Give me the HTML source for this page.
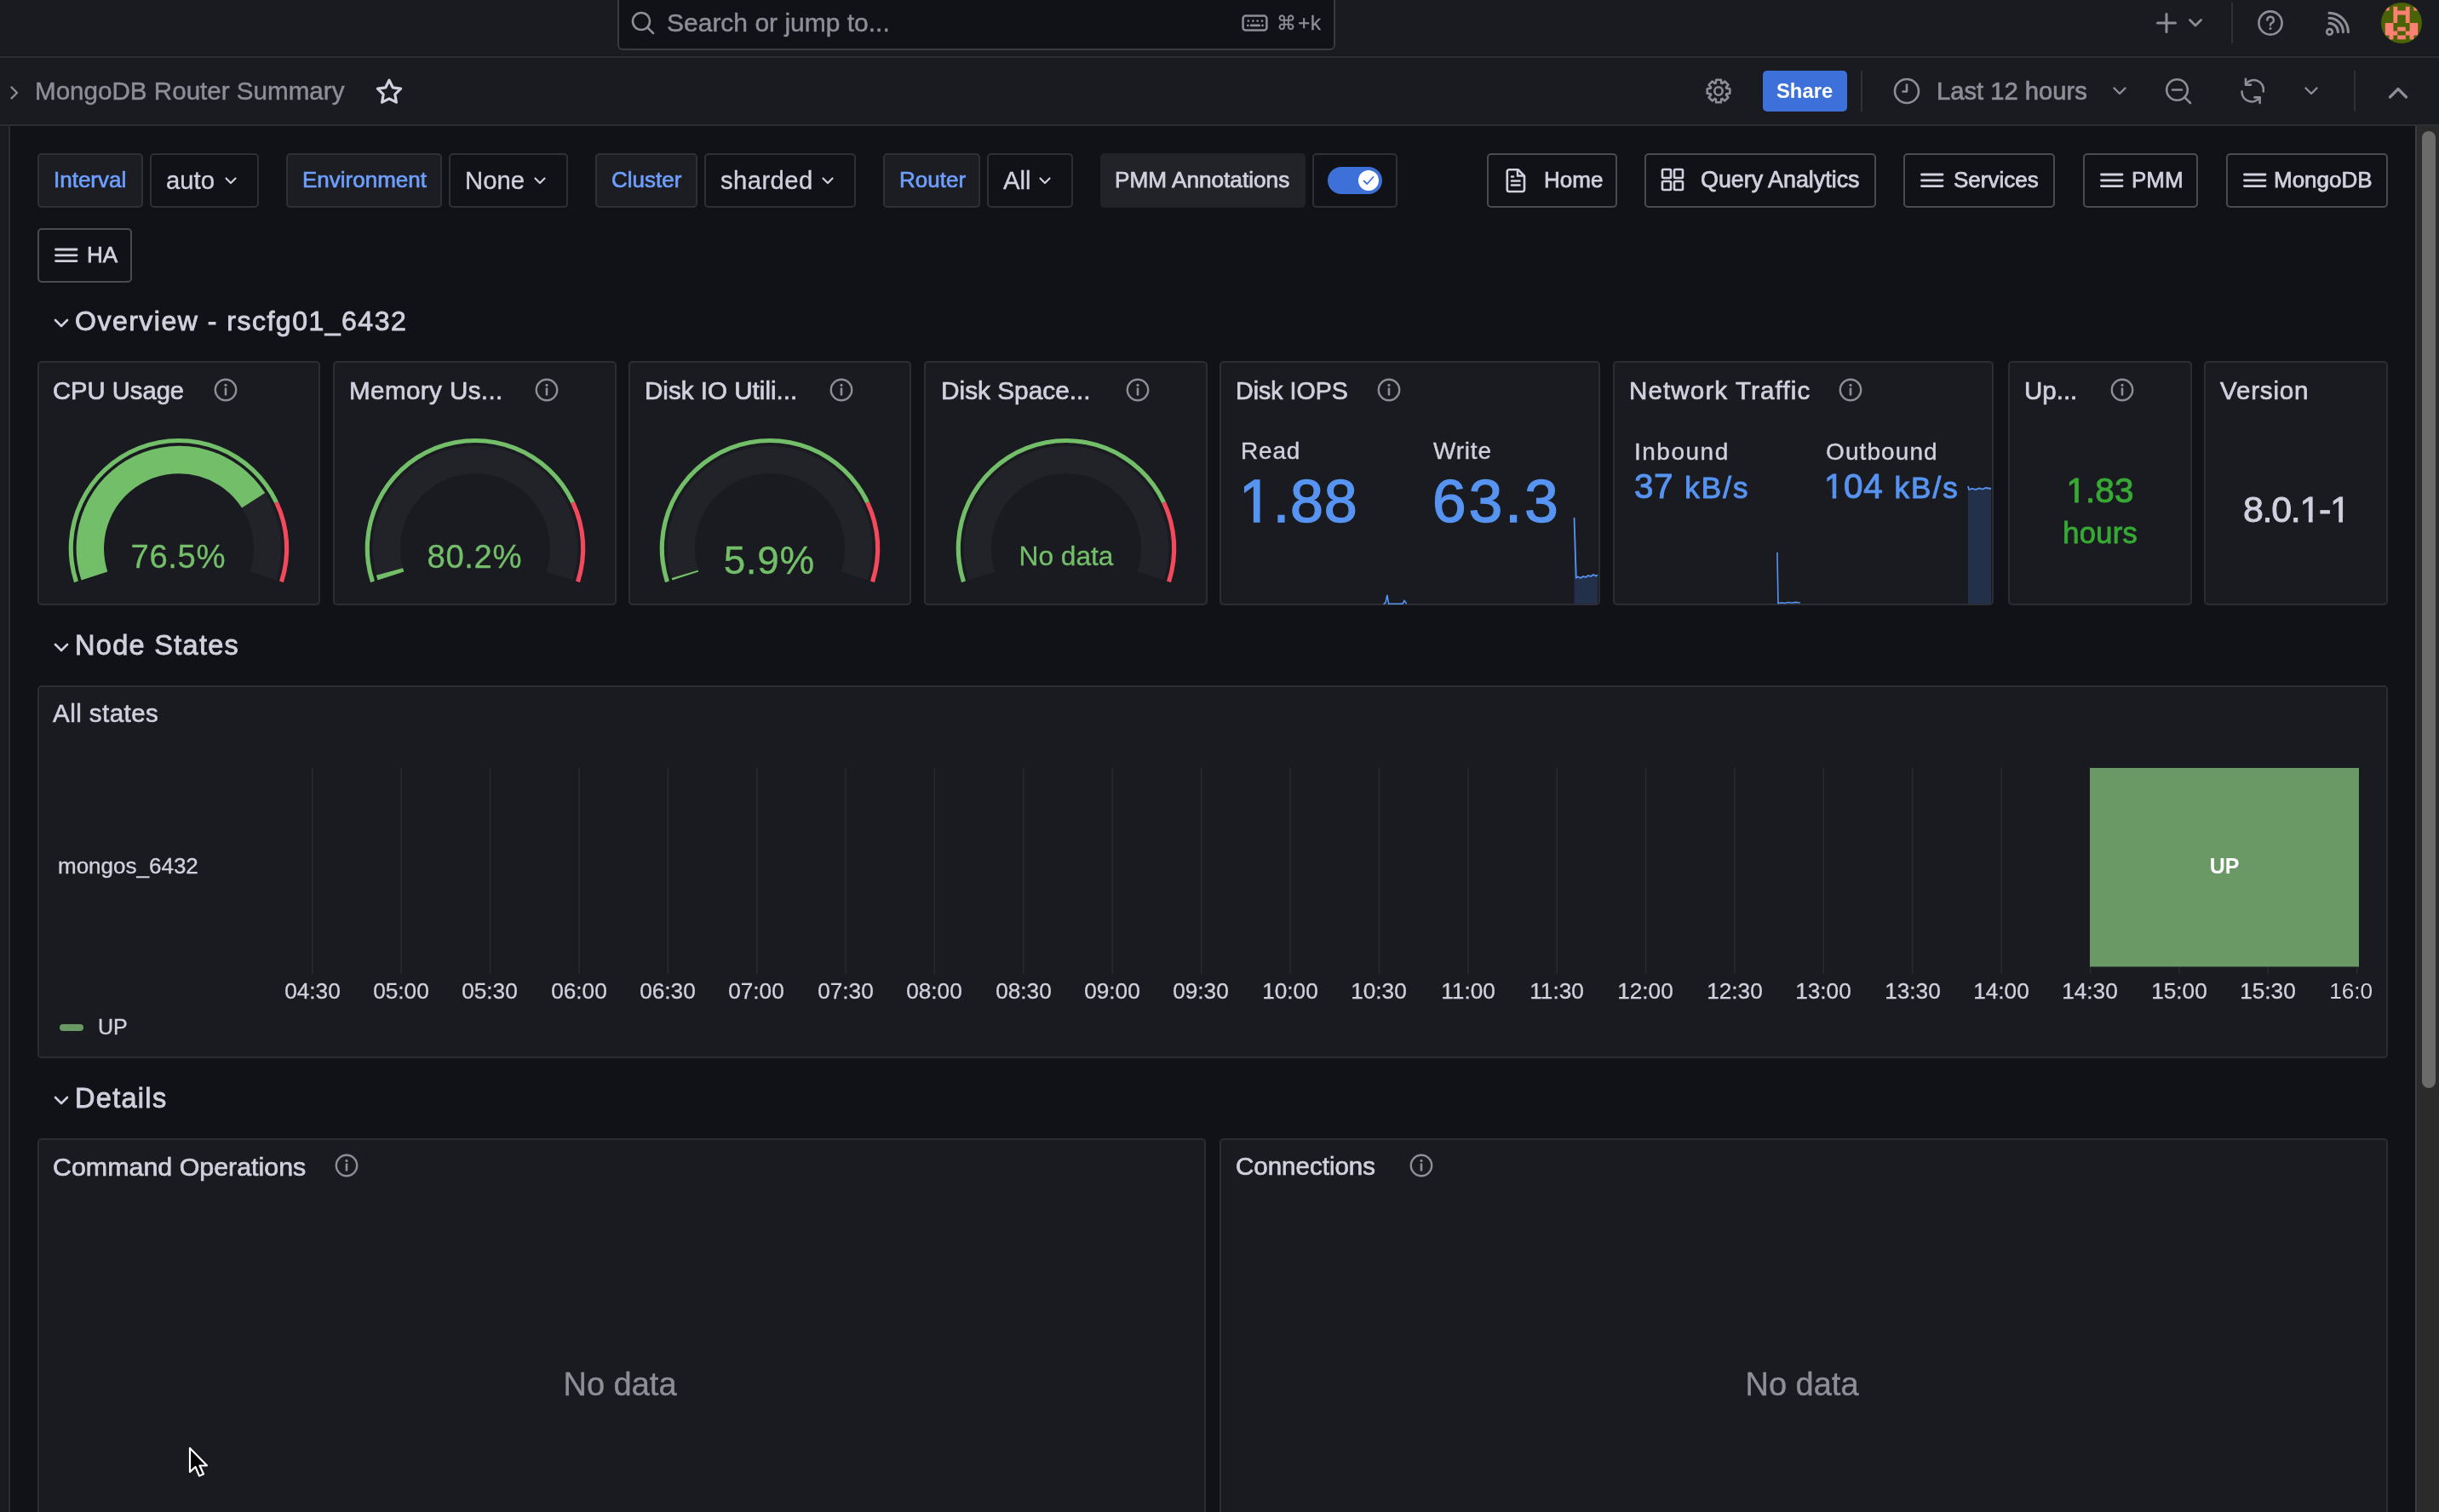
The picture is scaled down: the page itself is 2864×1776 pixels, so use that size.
<!DOCTYPE html><html><head><meta charset="utf-8"><style>
html,body{margin:0;padding:0;}
body{width:2864px;height:1776px;overflow:hidden;position:relative;background:#111217;font-family:"Liberation Sans", sans-serif;}
.t{position:absolute;white-space:nowrap;line-height:0;will-change:transform;}
.t span{display:inline-block;line-height:0;}
.b{position:absolute;box-sizing:border-box;}
.s{position:absolute;overflow:visible;}
</style></head><body>
<div class="b" style="left:0px;top:0px;width:2864px;height:146px;background:#1a1b20;border-radius:0px;"></div>
<div class="b" style="left:0px;top:66px;width:2864px;height:2px;background:#2c2d33;border-radius:0px;"></div>
<div class="b" style="left:0px;top:146px;width:2864px;height:2px;background:#2c2d33;border-radius:0px;"></div>
<div class="b" style="left:0px;top:148px;width:10px;height:1628px;background:#1a1b20;border-radius:0px;"></div>
<div class="b" style="left:10px;top:148px;width:2px;height:1628px;background:#2c2d33;border-radius:0px;"></div>
<div class="b" style="left:725px;top:-8px;width:843px;height:67px;background:#111217;border-radius:6px;box-shadow: inset 0 0 0 2px #383a41;"></div>
<svg class="s" style="left:740px;top:12px;" width="30" height="30" viewBox="0 0 30 30"><circle cx="13" cy="13" r="10" fill="none" stroke="#8e8e99" stroke-width="2.6"/><line x1="20.5" y1="20.5" x2="27" y2="27" stroke="#8e8e99" stroke-width="2.6" stroke-linecap="round"/></svg>
<div class="t" style="left:783px;top:26.61px;font-size:30px;color:#8e8e99;font-weight:400;-webkit-text-stroke:0.45px #8e8e99;"><span>Search or jump to...</span></div>
<svg class="s" style="left:1458px;top:17px;" width="32" height="20" viewBox="0 0 32 20"><rect x="1.6" y="1.6" width="27.8" height="17" rx="3.2" fill="none" stroke="#8e8e99" stroke-width="2.5"/><circle cx="7.9" cy="7.6" r="1.35" fill="#8e8e99"/><circle cx="13.4" cy="7.6" r="1.35" fill="#8e8e99"/><circle cx="18.7" cy="7.6" r="1.35" fill="#8e8e99"/><circle cx="24" cy="7.6" r="1.35" fill="#8e8e99"/><circle cx="7.3" cy="12.9" r="1.35" fill="#8e8e99"/><circle cx="24.6" cy="12.9" r="1.35" fill="#8e8e99"/><line x1="11" y1="12.9" x2="20.8" y2="12.9" stroke="#8e8e99" stroke-width="2.6" stroke-linecap="round"/></svg>
<div class="t" style="left:1498.5px;top:27.01px;font-size:24.5px;color:#8e8e99;font-weight:400;-webkit-text-stroke:0.3px #8e8e99;"><span><span style="font-size:23px">&#8984;</span><span style="margin-left:2px">+</span><span style="margin-left:0.5px">k</span></span></div>
<svg class="s" style="left:2530px;top:13px;" width="28" height="28" viewBox="0 0 28 28"><path d="M14 3.5V24.5M3.5 14H24.5" stroke="#8e8e99" stroke-width="3" stroke-linecap="round"/></svg>
<svg class="s" style="left:2569px;top:21px;" width="18" height="12" viewBox="0 0 18 12"><path d="M2.5 2.5L9 9L15.5 2.5" fill="none" stroke="#8e8e99" stroke-width="2.8" stroke-linecap="round" stroke-linejoin="round"/></svg>
<div class="b" style="left:2620px;top:3px;width:2px;height:48px;background:#303137;border-radius:0px;"></div>
<svg class="s" style="left:2650px;top:11px;" width="32" height="32" viewBox="0 0 32 32"><circle cx="16" cy="16" r="13.6" fill="none" stroke="#8e8e99" stroke-width="2.6"/><path d="M12.3 12.6a3.8 3.8 0 1 1 5.2 3.5c-1 .4-1.5 1.1-1.5 2.1v.6" fill="none" stroke="#8e8e99" stroke-width="2.4" stroke-linecap="round"/><circle cx="16" cy="22.6" r="1.5" fill="#8e8e99"/></svg>
<svg class="s" style="left:2720px;top:5px;" width="50" height="45" viewBox="0 0 50 45"><circle cx="15.5" cy="32.4" r="3.3" fill="none" stroke="#8e8e99" stroke-width="2.7"/><path d="M15 22.2a10.4 10.4 0 0 1 10.4 10.4M15 16.2a16.4 16.4 0 0 1 16.4 16.4M15 10.2a22.4 22.4 0 0 1 22.4 22.4" fill="none" stroke="#8e8e99" stroke-width="3.1" stroke-linecap="round"/></svg>
<svg class="s" style="left:2796px;top:3px;" width="48" height="48" viewBox="0 0 48 48"><defs><clipPath id="av"><circle cx="24" cy="24" r="24"/></clipPath></defs><g clip-path="url(#av)"><rect width="48" height="48" fill="#4a6306"/><path fill="#ff7f73" d="M4.8 4.8h4.8v4.8h-4.8zM14.4 4.8h4.8v4.8h-4.8zM28.8 4.8h4.8v4.8h-4.8zM38.4 4.8h4.8v4.8h-4.8zM14.4 9.6h4.8v4.8h-4.8zM19.2 9.6h4.8v4.8h-4.8zM24.0 9.6h4.8v4.8h-4.8zM28.8 9.6h4.8v4.8h-4.8zM14.4 14.4h4.8v4.8h-4.8zM28.8 14.4h4.8v4.8h-4.8zM14.4 19.2h4.8v4.8h-4.8zM28.8 19.2h4.8v4.8h-4.8zM4.8 24.0h4.8v4.8h-4.8zM9.6 24.0h4.8v4.8h-4.8zM33.6 24.0h4.8v4.8h-4.8zM38.4 24.0h4.8v4.8h-4.8zM4.8 28.8h4.8v4.8h-4.8zM9.6 28.8h4.8v4.8h-4.8zM19.2 28.8h4.8v4.8h-4.8zM24.0 28.8h4.8v4.8h-4.8zM33.6 28.8h4.8v4.8h-4.8zM38.4 28.8h4.8v4.8h-4.8zM4.8 33.6h4.8v4.8h-4.8zM9.6 33.6h4.8v4.8h-4.8zM14.4 33.6h4.8v4.8h-4.8zM28.8 33.6h4.8v4.8h-4.8zM33.6 33.6h4.8v4.8h-4.8zM38.4 33.6h4.8v4.8h-4.8zM9.6 38.4h4.8v4.8h-4.8zM19.2 38.4h4.8v4.8h-4.8zM24.0 38.4h4.8v4.8h-4.8zM33.6 38.4h4.8v4.8h-4.8z"/></g></svg>
<svg class="s" style="left:10px;top:100px;" width="14" height="18" viewBox="0 0 14 18"><path d="M3.5 2.5L10 9L3.5 15.5" fill="none" stroke="#8e8e99" stroke-width="2.4" stroke-linecap="round" stroke-linejoin="round"/></svg>
<div class="t" style="left:40.5px;top:106.74px;font-size:29.6px;color:#8e8e99;font-weight:400;-webkit-text-stroke:0.45px #8e8e99;"><span>MongoDB Router Summary</span></div>
<svg class="s" style="left:440px;top:91px;" width="34" height="32" viewBox="0 0 34 32"><path d="M17 3.2l4.2 8.6 9.4 1.4-6.8 6.6 1.6 9.4L17 24.8l-8.4 4.4 1.6-9.4-6.8-6.6 9.4-1.4z" fill="none" stroke="#d0d0de" stroke-width="3.2" stroke-linejoin="round"/></svg>
<svg class="s" style="left:2002px;top:91px;" width="32" height="32" viewBox="0 0 32 32"><path d="M12.78 6.64L13.17 2.70L18.83 2.70L19.22 6.64L20.34 7.10L23.41 4.59L27.41 8.59L24.90 11.66L25.36 12.78L29.30 13.17L29.30 18.83L25.36 19.22L24.90 20.34L27.41 23.41L23.41 27.41L20.34 24.90L19.22 25.36L18.83 29.30L13.17 29.30L12.78 25.36L11.66 24.90L8.59 27.41L4.59 23.41L7.10 20.34L6.64 19.22L2.70 18.83L2.70 13.17L6.64 12.78L7.10 11.66L4.59 8.59L8.59 4.59L11.66 7.10Z" fill="none" stroke="#8e8e99" stroke-width="2.6" stroke-linejoin="round"/><circle cx="16" cy="16" r="4.7" fill="none" stroke="#8e8e99" stroke-width="2.6"/></svg>
<div class="b" style="left:2070px;top:83px;width:99px;height:48px;background:#3d71d9;border-radius:5px;"></div>
<div class="t" style="left:2086px;top:106.75px;font-size:23.8px;color:#ffffff;font-weight:700;"><span>Share</span></div>
<div class="b" style="left:2185px;top:83px;width:2px;height:48px;background:#303137;border-radius:0px;"></div>
<svg class="s" style="left:2222px;top:90px;" width="34" height="34" viewBox="0 0 34 34"><circle cx="17" cy="17" r="14" fill="none" stroke="#8e8e99" stroke-width="2.6"/><path d="M17 9.5V17.5H12.5" fill="none" stroke="#8e8e99" stroke-width="2.6" stroke-linecap="round" stroke-linejoin="round"/></svg>
<div class="t" style="left:2274px;top:106.88px;font-size:29.2px;color:#8e8e99;font-weight:400;-webkit-text-stroke:0.7px #8e8e99;"><span>Last 12 hours</span></div>
<svg class="s" style="left:2480px;top:101px;" width="18" height="12" viewBox="0 0 18 12"><path d="M2.5 2.5L9 9L15.5 2.5" fill="none" stroke="#8e8e99" stroke-width="2.4" stroke-linecap="round" stroke-linejoin="round"/></svg>
<svg class="s" style="left:2541px;top:90px;" width="34" height="34" viewBox="0 0 34 34"><circle cx="15.5" cy="15.5" r="12.3" fill="none" stroke="#8e8e99" stroke-width="2.6"/><path d="M10 15.5H21M24.3 24.3L31 31" fill="none" stroke="#8e8e99" stroke-width="2.6" stroke-linecap="round"/></svg>
<svg class="s" style="left:2629px;top:90px;" width="34" height="34" viewBox="0 0 34 34"><path d="M3.6 17.5A11.5 11.5 0 0 0 24.5 24.5M28.8 17.5A11.5 11.5 0 0 0 8 9" fill="none" stroke="#8e8e99" stroke-width="2.6" stroke-linecap="round"/><path d="M8 2.8V9.6H14" fill="none" stroke="#8e8e99" stroke-width="2.6" stroke-linecap="round" stroke-linejoin="round"/><path d="M24.6 31V24.4H18.4" fill="none" stroke="#8e8e99" stroke-width="2.6" stroke-linecap="round" stroke-linejoin="round"/></svg>
<svg class="s" style="left:2705px;top:101px;" width="18" height="12" viewBox="0 0 18 12"><path d="M2.5 2.5L9 9L15.5 2.5" fill="none" stroke="#8e8e99" stroke-width="2.4" stroke-linecap="round" stroke-linejoin="round"/></svg>
<div class="b" style="left:2764px;top:83px;width:2px;height:48px;background:#303137;border-radius:0px;"></div>
<svg class="s" style="left:2804px;top:101px;" width="24" height="16" viewBox="0 0 24 16"><path d="M2.5 13L12 3.5L21.5 13" fill="none" stroke="#8e8e99" stroke-width="3.2" stroke-linecap="round" stroke-linejoin="round"/></svg>
<div class="b" style="left:44px;top:180px;width:124px;height:64px;background:#1c1d22;border-radius:5px;box-shadow: inset 0 0 0 2px #2f3036;"></div>
<div class="t" style="left:63px;top:210.99px;font-size:26px;color:#6e9fff;font-weight:400;-webkit-text-stroke:0.65px #6e9fff;"><span>Interval</span></div>
<div class="b" style="left:176px;top:180px;width:128px;height:64px;background:#111217;border-radius:5px;box-shadow: inset 0 0 0 2px #2f3036;"></div>
<div class="t" style="left:195px;top:211.85px;font-size:29.3px;color:#d0d0de;font-weight:400;letter-spacing:0px;-webkit-text-stroke:0.35px #d0d0de;"><span>auto</span></div>
<svg class="s" style="left:264px;top:208px;" width="14" height="9" viewBox="0 0 14 9"><path d="M1.5 1.5L7 7L12.5 1.5" fill="none" stroke="#d0d0de" stroke-width="2.2" stroke-linecap="round" stroke-linejoin="round"/></svg>
<div class="b" style="left:336px;top:180px;width:183px;height:64px;background:#1c1d22;border-radius:5px;box-shadow: inset 0 0 0 2px #2f3036;"></div>
<div class="t" style="left:355px;top:210.99px;font-size:26px;color:#6e9fff;font-weight:400;-webkit-text-stroke:0.65px #6e9fff;"><span>Environment</span></div>
<div class="b" style="left:527px;top:180px;width:140px;height:64px;background:#111217;border-radius:5px;box-shadow: inset 0 0 0 2px #2f3036;"></div>
<div class="t" style="left:546px;top:211.85px;font-size:29.3px;color:#d0d0de;font-weight:400;letter-spacing:0px;-webkit-text-stroke:0.35px #d0d0de;"><span>None</span></div>
<svg class="s" style="left:627px;top:208px;" width="14" height="9" viewBox="0 0 14 9"><path d="M1.5 1.5L7 7L12.5 1.5" fill="none" stroke="#d0d0de" stroke-width="2.2" stroke-linecap="round" stroke-linejoin="round"/></svg>
<div class="b" style="left:699px;top:180px;width:120px;height:64px;background:#1c1d22;border-radius:5px;box-shadow: inset 0 0 0 2px #2f3036;"></div>
<div class="t" style="left:718px;top:210.99px;font-size:26px;color:#6e9fff;font-weight:400;-webkit-text-stroke:0.65px #6e9fff;"><span>Cluster</span></div>
<div class="b" style="left:827px;top:180px;width:178px;height:64px;background:#111217;border-radius:5px;box-shadow: inset 0 0 0 2px #2f3036;"></div>
<div class="t" style="left:846px;top:211.85px;font-size:29.3px;color:#d0d0de;font-weight:400;letter-spacing:0.4px;-webkit-text-stroke:0.35px #d0d0de;"><span>sharded</span></div>
<svg class="s" style="left:965px;top:208px;" width="14" height="9" viewBox="0 0 14 9"><path d="M1.5 1.5L7 7L12.5 1.5" fill="none" stroke="#d0d0de" stroke-width="2.2" stroke-linecap="round" stroke-linejoin="round"/></svg>
<div class="b" style="left:1037px;top:180px;width:114px;height:64px;background:#1c1d22;border-radius:5px;box-shadow: inset 0 0 0 2px #2f3036;"></div>
<div class="t" style="left:1056px;top:210.99px;font-size:26px;color:#6e9fff;font-weight:400;-webkit-text-stroke:0.65px #6e9fff;"><span>Router</span></div>
<div class="b" style="left:1159px;top:180px;width:101px;height:64px;background:#111217;border-radius:5px;box-shadow: inset 0 0 0 2px #2f3036;"></div>
<div class="t" style="left:1178px;top:211.85px;font-size:29.3px;color:#d0d0de;font-weight:400;letter-spacing:0px;-webkit-text-stroke:0.35px #d0d0de;"><span>All</span></div>
<svg class="s" style="left:1220px;top:208px;" width="14" height="9" viewBox="0 0 14 9"><path d="M1.5 1.5L7 7L12.5 1.5" fill="none" stroke="#d0d0de" stroke-width="2.2" stroke-linecap="round" stroke-linejoin="round"/></svg>
<div class="b" style="left:1292px;top:180px;width:241px;height:64px;background:#222329;border-radius:5px;"></div>
<div class="t" style="left:1309px;top:210.92px;font-size:26.2px;color:#d0d0de;font-weight:400;-webkit-text-stroke:0.75px #d0d0de;"><span>PMM Annotations</span></div>
<div class="b" style="left:1541px;top:180px;width:100px;height:64px;background:#111217;border-radius:5px;box-shadow: inset 0 0 0 2px #2f3036;"></div>
<div class="b" style="left:1559px;top:196px;width:64px;height:32px;background:#3d71d9;border-radius:16px;"></div>
<svg class="s" style="left:1593px;top:198px;" width="28" height="28" viewBox="0 0 28 28"><circle cx="14" cy="14" r="12" fill="#fff"/><path d="M8.5 14.5L12.3 18L19.5 10" fill="none" stroke="#3d71d9" stroke-width="1.8" stroke-linecap="round" stroke-linejoin="round"/></svg>
<div class="b" style="left:1746px;top:180px;width:153px;height:64px;background:#111217;border-radius:5px;box-shadow: inset 0 0 0 2px #4a4b51;"></div>
<div class="t" style="left:1813px;top:210.99px;font-size:26px;color:#d0d0de;font-weight:400;-webkit-text-stroke:0.75px #d0d0de;"><span>Home</span></div>
<svg class="s" style="left:1768px;top:197px;" width="26" height="30" viewBox="0 0 26 30"><path d="M4 2.2h10.5l7.5 7.5v16.1a2.2 2.2 0 0 1-2.2 2.2H4a2.2 2.2 0 0 1-2.2-2.2V4.4A2.2 2.2 0 0 1 4 2.2z" fill="none" stroke="#d0d0de" stroke-width="2.6" stroke-linejoin="round"/><path d="M14 2.5V9.5H21.5" fill="none" stroke="#d0d0de" stroke-width="2.4"/><path d="M7 10.5H9M7 15.5H16.5M7 20.5H16.5" stroke="#d0d0de" stroke-width="2.6" stroke-linecap="round"/></svg>
<div class="b" style="left:1931px;top:180px;width:272px;height:64px;background:#111217;border-radius:5px;box-shadow: inset 0 0 0 2px #4a4b51;"></div>
<div class="t" style="left:1997px;top:210.70px;font-size:26.85px;color:#d0d0de;font-weight:400;-webkit-text-stroke:0.75px #d0d0de;"><span>Query Analytics</span></div>
<svg class="s" style="left:1950px;top:197px;" width="30" height="30" viewBox="0 0 30 30"><rect x="2" y="2" width="10" height="10" rx="1.2" fill="none" stroke="#d0d0de" stroke-width="2.6"/><rect x="2" y="16" width="10" height="10" rx="1.2" fill="none" stroke="#d0d0de" stroke-width="2.6"/><rect x="16" y="2" width="10" height="10" rx="1.2" fill="none" stroke="#d0d0de" stroke-width="2.6"/><rect x="16" y="16" width="10" height="10" rx="1.2" fill="none" stroke="#d0d0de" stroke-width="2.6"/></svg>
<div class="b" style="left:2235px;top:180px;width:178px;height:64px;background:#111217;border-radius:5px;box-shadow: inset 0 0 0 2px #4a4b51;"></div>
<div class="t" style="left:2294px;top:210.99px;font-size:26px;color:#d0d0de;font-weight:400;-webkit-text-stroke:0.75px #d0d0de;"><span>Services</span></div>
<svg class="s" style="left:2255px;top:203px;" width="28" height="18" viewBox="0 0 28 18"><line x1="1.5" y1="2.0" x2="26" y2="2.0" stroke="#d0d0de" stroke-width="2.8" stroke-linecap="round"/><line x1="1.5" y1="8.8" x2="26" y2="8.8" stroke="#d0d0de" stroke-width="2.8" stroke-linecap="round"/><line x1="1.5" y1="15.6" x2="26" y2="15.6" stroke="#d0d0de" stroke-width="2.8" stroke-linecap="round"/></svg>
<div class="b" style="left:2446px;top:180px;width:135px;height:64px;background:#111217;border-radius:5px;box-shadow: inset 0 0 0 2px #4a4b51;"></div>
<div class="t" style="left:2503px;top:210.99px;font-size:26px;color:#d0d0de;font-weight:400;-webkit-text-stroke:0.75px #d0d0de;"><span>PMM</span></div>
<svg class="s" style="left:2466px;top:203px;" width="28" height="18" viewBox="0 0 28 18"><line x1="1.5" y1="2.0" x2="26" y2="2.0" stroke="#d0d0de" stroke-width="2.8" stroke-linecap="round"/><line x1="1.5" y1="8.8" x2="26" y2="8.8" stroke="#d0d0de" stroke-width="2.8" stroke-linecap="round"/><line x1="1.5" y1="15.6" x2="26" y2="15.6" stroke="#d0d0de" stroke-width="2.8" stroke-linecap="round"/></svg>
<div class="b" style="left:2614px;top:180px;width:190px;height:64px;background:#111217;border-radius:5px;box-shadow: inset 0 0 0 2px #4a4b51;"></div>
<div class="t" style="left:2670px;top:210.99px;font-size:26px;color:#d0d0de;font-weight:400;-webkit-text-stroke:0.75px #d0d0de;"><span>MongoDB</span></div>
<svg class="s" style="left:2634px;top:203px;" width="28" height="18" viewBox="0 0 28 18"><line x1="1.5" y1="2.0" x2="26" y2="2.0" stroke="#d0d0de" stroke-width="2.8" stroke-linecap="round"/><line x1="1.5" y1="8.8" x2="26" y2="8.8" stroke="#d0d0de" stroke-width="2.8" stroke-linecap="round"/><line x1="1.5" y1="15.6" x2="26" y2="15.6" stroke="#d0d0de" stroke-width="2.8" stroke-linecap="round"/></svg>
<div class="b" style="left:44px;top:268px;width:111px;height:64px;background:#111217;border-radius:5px;box-shadow: inset 0 0 0 2px #4a4b51;"></div>
<svg class="s" style="left:64px;top:291px;" width="28" height="18" viewBox="0 0 28 18"><line x1="1.5" y1="2.0" x2="26" y2="2.0" stroke="#d0d0de" stroke-width="2.8" stroke-linecap="round"/><line x1="1.5" y1="8.8" x2="26" y2="8.8" stroke="#d0d0de" stroke-width="2.8" stroke-linecap="round"/><line x1="1.5" y1="15.6" x2="26" y2="15.6" stroke="#d0d0de" stroke-width="2.8" stroke-linecap="round"/></svg>
<div class="t" style="left:102px;top:298.99px;font-size:26px;color:#d0d0de;font-weight:400;-webkit-text-stroke:0.75px #d0d0de;"><span>HA</span></div>
<div class="b" style="left:2836px;top:148px;width:28px;height:1628px;background:#2b2b2b;border-radius:0px;"></div>
<div class="b" style="left:2836px;top:148px;width:2px;height:1628px;background:#3d3d3d;border-radius:0px;"></div>
<div class="b" style="left:2844px;top:154px;width:16px;height:1124px;background:#6b6b6b;border-radius:8px;"></div>
<svg class="s" style="left:62px;top:372.5px;" width="20" height="14" viewBox="0 0 20 14"><path d="M3 3L10 10L17 3" fill="none" stroke="#d0d0de" stroke-width="2.6" stroke-linecap="round" stroke-linejoin="round"/></svg>
<div class="t" style="left:88px;top:377.41px;font-size:32px;color:#d0d0de;font-weight:400;letter-spacing:1.5px;-webkit-text-stroke:0.9px #d0d0de;"><span>Overview - rscfg01_6432</span></div>
<svg class="s" style="left:62px;top:753.5px;" width="20" height="14" viewBox="0 0 20 14"><path d="M3 3L10 10L17 3" fill="none" stroke="#d0d0de" stroke-width="2.6" stroke-linecap="round" stroke-linejoin="round"/></svg>
<div class="t" style="left:87.5px;top:758.24px;font-size:32.5px;color:#d0d0de;font-weight:400;letter-spacing:1.3px;-webkit-text-stroke:0.9px #d0d0de;"><span>Node States</span></div>
<svg class="s" style="left:62px;top:1285.5px;" width="20" height="14" viewBox="0 0 20 14"><path d="M3 3L10 10L17 3" fill="none" stroke="#d0d0de" stroke-width="2.6" stroke-linecap="round" stroke-linejoin="round"/></svg>
<div class="t" style="left:87.5px;top:1290.24px;font-size:32.5px;color:#d0d0de;font-weight:400;letter-spacing:1.3px;-webkit-text-stroke:0.9px #d0d0de;"><span>Details</span></div>
<div class="b" style="left:44px;top:424px;width:332px;height:287px;background:#1a1b20;border-radius:5px;box-shadow: inset 0 0 0 2px #2c2d33;"></div>
<div class="b" style="left:391px;top:424px;width:333px;height:287px;background:#1a1b20;border-radius:5px;box-shadow: inset 0 0 0 2px #2c2d33;"></div>
<div class="b" style="left:738px;top:424px;width:332px;height:287px;background:#1a1b20;border-radius:5px;box-shadow: inset 0 0 0 2px #2c2d33;"></div>
<div class="b" style="left:1085px;top:424px;width:333px;height:287px;background:#1a1b20;border-radius:5px;box-shadow: inset 0 0 0 2px #2c2d33;"></div>
<div class="b" style="left:1432px;top:424px;width:447px;height:287px;background:#1a1b20;border-radius:5px;box-shadow: inset 0 0 0 2px #2c2d33;"></div>
<div class="b" style="left:1894px;top:424px;width:447px;height:287px;background:#1a1b20;border-radius:5px;box-shadow: inset 0 0 0 2px #2c2d33;"></div>
<div class="b" style="left:2358px;top:424px;width:216px;height:287px;background:#1a1b20;border-radius:5px;box-shadow: inset 0 0 0 2px #2c2d33;"></div>
<div class="b" style="left:2588px;top:424px;width:216px;height:287px;background:#1a1b20;border-radius:5px;box-shadow: inset 0 0 0 2px #2c2d33;"></div>
<div class="t" style="left:62px;top:458.88px;font-size:29.2px;color:#d0d0de;font-weight:400;letter-spacing:0px;-webkit-text-stroke:0.7px #d0d0de;"><span>CPU Usage</span></div>
<svg class="s" style="left:250px;top:443px;" width="30" height="30" viewBox="0 0 30 30"><circle cx="15" cy="15" r="12.2" fill="none" stroke="#8e8e99" stroke-width="2.4"/><line x1="15" y1="13.5" x2="15" y2="20.5" stroke="#8e8e99" stroke-width="2.6" stroke-linecap="round"/><circle cx="15" cy="9.4" r="1.6" fill="#8e8e99"/></svg>
<div class="t" style="left:410px;top:458.74px;font-size:29.6px;color:#d0d0de;font-weight:400;letter-spacing:0.4px;-webkit-text-stroke:0.7px #d0d0de;"><span>Memory Us...</span></div>
<svg class="s" style="left:627px;top:443px;" width="30" height="30" viewBox="0 0 30 30"><circle cx="15" cy="15" r="12.2" fill="none" stroke="#8e8e99" stroke-width="2.4"/><line x1="15" y1="13.5" x2="15" y2="20.5" stroke="#8e8e99" stroke-width="2.6" stroke-linecap="round"/><circle cx="15" cy="9.4" r="1.6" fill="#8e8e99"/></svg>
<div class="t" style="left:757px;top:458.74px;font-size:29.6px;color:#d0d0de;font-weight:400;letter-spacing:0px;-webkit-text-stroke:0.7px #d0d0de;"><span>Disk IO Utili...</span></div>
<svg class="s" style="left:973px;top:443px;" width="30" height="30" viewBox="0 0 30 30"><circle cx="15" cy="15" r="12.2" fill="none" stroke="#8e8e99" stroke-width="2.4"/><line x1="15" y1="13.5" x2="15" y2="20.5" stroke="#8e8e99" stroke-width="2.6" stroke-linecap="round"/><circle cx="15" cy="9.4" r="1.6" fill="#8e8e99"/></svg>
<div class="t" style="left:1105px;top:458.67px;font-size:29.8px;color:#d0d0de;font-weight:400;letter-spacing:0px;-webkit-text-stroke:0.7px #d0d0de;"><span>Disk Space...</span></div>
<svg class="s" style="left:1321px;top:443px;" width="30" height="30" viewBox="0 0 30 30"><circle cx="15" cy="15" r="12.2" fill="none" stroke="#8e8e99" stroke-width="2.4"/><line x1="15" y1="13.5" x2="15" y2="20.5" stroke="#8e8e99" stroke-width="2.6" stroke-linecap="round"/><circle cx="15" cy="9.4" r="1.6" fill="#8e8e99"/></svg>
<div class="t" style="left:1451px;top:459.09px;font-size:28.6px;color:#d0d0de;font-weight:400;letter-spacing:0px;-webkit-text-stroke:0.7px #d0d0de;"><span>Disk IOPS</span></div>
<svg class="s" style="left:1616px;top:443px;" width="30" height="30" viewBox="0 0 30 30"><circle cx="15" cy="15" r="12.2" fill="none" stroke="#8e8e99" stroke-width="2.4"/><line x1="15" y1="13.5" x2="15" y2="20.5" stroke="#8e8e99" stroke-width="2.6" stroke-linecap="round"/><circle cx="15" cy="9.4" r="1.6" fill="#8e8e99"/></svg>
<div class="t" style="left:1913px;top:458.74px;font-size:29.6px;color:#d0d0de;font-weight:400;letter-spacing:1.1px;-webkit-text-stroke:0.7px #d0d0de;"><span>Network Traffic</span></div>
<svg class="s" style="left:2158px;top:443px;" width="30" height="30" viewBox="0 0 30 30"><circle cx="15" cy="15" r="12.2" fill="none" stroke="#8e8e99" stroke-width="2.4"/><line x1="15" y1="13.5" x2="15" y2="20.5" stroke="#8e8e99" stroke-width="2.6" stroke-linecap="round"/><circle cx="15" cy="9.4" r="1.6" fill="#8e8e99"/></svg>
<div class="t" style="left:2377px;top:458.78px;font-size:29.5px;color:#d0d0de;font-weight:400;letter-spacing:0px;-webkit-text-stroke:0.7px #d0d0de;"><span>Up...</span></div>
<svg class="s" style="left:2477px;top:443px;" width="30" height="30" viewBox="0 0 30 30"><circle cx="15" cy="15" r="12.2" fill="none" stroke="#8e8e99" stroke-width="2.4"/><line x1="15" y1="13.5" x2="15" y2="20.5" stroke="#8e8e99" stroke-width="2.6" stroke-linecap="round"/><circle cx="15" cy="9.4" r="1.6" fill="#8e8e99"/></svg>
<div class="t" style="left:2607px;top:458.74px;font-size:29.6px;color:#d0d0de;font-weight:400;letter-spacing:0.8px;-webkit-text-stroke:0.7px #d0d0de;"><span>Version</span></div>
<svg class="s" style="left:0;top:0" width="2864" height="1776"><path d="M95.49 681.41A120.4 120.4 0 1 1 324.51 681.41L293.69 671.39A88 88 0 1 0 126.31 671.39Z" fill="#222329"/><path d="M95.49 681.41A120.4 120.4 0 0 1 311.25 579.05L284.00 596.58A88 88 0 0 0 126.31 671.39Z" fill="#73bf69"/><path d="M87.03 684.16A129.3 129.3 0 0 1 326.99 589.15L322.29 591.36A124.1 124.1 0 0 0 91.97 682.55Z" fill="#73bf69"/><path d="M326.99 589.15A129.3 129.3 0 0 1 332.97 684.16L328.03 682.55A124.1 124.1 0 0 0 322.29 591.36Z" fill="#f2495c"/></svg>
<svg class="s" style="left:0;top:0" width="2864" height="1776"><path d="M443.49 681.41A120.4 120.4 0 1 1 672.51 681.41L641.69 671.39A88 88 0 1 0 474.31 671.39Z" fill="#222329"/><path d="M443.49 681.41A120.4 120.4 0 0 1 441.84 675.87L473.10 667.35A88 88 0 0 0 474.31 671.39Z" fill="#73bf69"/><path d="M435.03 684.16A129.3 129.3 0 0 1 674.99 589.15L670.29 591.36A124.1 124.1 0 0 0 439.97 682.55Z" fill="#73bf69"/><path d="M674.99 589.15A129.3 129.3 0 0 1 680.97 684.16L676.03 682.55A124.1 124.1 0 0 0 670.29 591.36Z" fill="#f2495c"/></svg>
<svg class="s" style="left:0;top:0" width="2864" height="1776"><path d="M789.49 681.41A120.4 120.4 0 1 1 1018.51 681.41L987.69 671.39A88 88 0 1 0 820.31 671.39Z" fill="#222329"/><path d="M789.49 681.41A120.4 120.4 0 0 1 788.74 679.00L819.76 669.63A88 88 0 0 0 820.31 671.39Z" fill="#73bf69"/><path d="M781.03 684.16A129.3 129.3 0 0 1 1020.99 589.15L1016.29 591.36A124.1 124.1 0 0 0 785.97 682.55Z" fill="#73bf69"/><path d="M1020.99 589.15A129.3 129.3 0 0 1 1026.97 684.16L1022.03 682.55A124.1 124.1 0 0 0 1016.29 591.36Z" fill="#f2495c"/></svg>
<svg class="s" style="left:0;top:0" width="2864" height="1776"><path d="M1137.49 681.41A120.4 120.4 0 1 1 1366.51 681.41L1335.69 671.39A88 88 0 1 0 1168.31 671.39Z" fill="#222329"/><path d="M1129.03 684.16A129.3 129.3 0 0 1 1368.99 589.15L1364.29 591.36A124.1 124.1 0 0 0 1133.97 682.55Z" fill="#73bf69"/><path d="M1368.99 589.15A129.3 129.3 0 0 1 1374.97 684.16L1370.03 682.55A124.1 124.1 0 0 0 1364.29 591.36Z" fill="#f2495c"/></svg>
<div class="t" style="left:-791px;width:2000px;text-align:center;top:654.43px;font-size:38.3px;color:#73bf69;font-weight:400;letter-spacing:0.6px;-webkit-text-stroke:0.3px #73bf69;"><span style="margin-right:-0.6px">76.5%</span></div>
<div class="t" style="left:-443px;width:2000px;text-align:center;top:654.43px;font-size:38.3px;color:#73bf69;font-weight:400;letter-spacing:0.6px;-webkit-text-stroke:0.3px #73bf69;"><span style="margin-right:-0.6px">80.2%</span></div>
<div class="t" style="left:-97px;width:2000px;text-align:center;top:658.10px;font-size:45.9px;color:#73bf69;font-weight:400;letter-spacing:0.7px;-webkit-text-stroke:0.3px #73bf69;"><span style="margin-right:-0.7px">5.9%</span></div>
<div class="t" style="left:252px;width:2000px;text-align:center;top:653.02px;font-size:31.7px;color:#73bf69;font-weight:400;letter-spacing:0px;-webkit-text-stroke:0.3px #73bf69;"><span style="margin-right:0px">No data</span></div>
<div class="t" style="left:1457px;top:530.30px;font-size:28px;color:#d0d0de;font-weight:400;letter-spacing:0.8px;-webkit-text-stroke:0.4px #d0d0de;"><span>Read</span></div>
<div class="t" style="left:1683px;top:530.30px;font-size:28px;color:#d0d0de;font-weight:400;letter-spacing:0.8px;-webkit-text-stroke:0.4px #d0d0de;"><span>Write</span></div>
<div class="t" style="left:1455px;top:589.45px;font-size:70px;color:#5794f2;font-weight:400;letter-spacing:0.8px;-webkit-text-stroke:1.5px #5794f2;"><span>1.88</span></div>
<div class="t" style="left:1682px;top:589.10px;font-size:71px;color:#5794f2;font-weight:400;letter-spacing:3.2px;-webkit-text-stroke:1.5px #5794f2;"><span>63.3</span></div>
<div class="t" style="left:1918.5px;top:530.50px;font-size:28px;color:#d0d0de;font-weight:400;letter-spacing:1.5px;-webkit-text-stroke:0.4px #d0d0de;"><span>Inbound</span></div>
<div class="t" style="left:2143.5px;top:530.50px;font-size:28px;color:#d0d0de;font-weight:400;letter-spacing:1.1px;-webkit-text-stroke:0.4px #d0d0de;"><span>Outbound</span></div>
<div class="t" style="left:1919px;top:570.57px;font-size:40.5px;color:#5794f2;font-weight:400;letter-spacing:0.6px;-webkit-text-stroke:1.0px #5794f2;"><span>37<span style="font-size:35px;margin-left:13px;letter-spacing:2.1px">kB/s</span></span></div>
<div class="t" style="left:2142px;top:570.57px;font-size:40.5px;color:#5794f2;font-weight:400;letter-spacing:0.6px;-webkit-text-stroke:1.0px #5794f2;"><span>104<span style="font-size:35px;margin-left:13px;letter-spacing:2.1px">kB/s</span></span></div>
<div class="t" style="left:1465.5px;width:2000px;text-align:center;top:576.17px;font-size:40.5px;color:#37a935;font-weight:400;letter-spacing:0px;-webkit-text-stroke:1.0px #37a935;"><span style="margin-right:0px">1.83</span></div>
<div class="t" style="left:1466px;width:2000px;text-align:center;top:625.95px;font-size:34.5px;color:#37a935;font-weight:400;letter-spacing:0.3px;-webkit-text-stroke:0.9px #37a935;"><span style="margin-right:-0.3px">hours</span></div>
<div class="t" style="left:1696.5px;width:2000px;text-align:center;top:598.10px;font-size:43px;color:#d0d0de;font-weight:400;letter-spacing:-1.3px;-webkit-text-stroke:0.9px #d0d0de;"><span style="margin-right:1.3px">8.0.1-1</span></div>
<svg class="s" style="left:0;top:0" width="2864" height="1776"><rect x="1458" y="606" width="13.849999999999909" height="9" fill="#1a1b20"/><rect x="1479.57" y="606" width="12.430000000000064" height="9" fill="#1a1b20"/><rect x="2428" y="585" width="8.13000000000011" height="7" fill="#1a1b20"/><rect x="2440.83" y="585" width="7.170000000000073" height="7" fill="#1a1b20"/><rect x="2701" y="608" width="9.840000000000146" height="7" fill="#1a1b20"/><rect x="2715.65" y="608" width="7.349999999999909" height="7" fill="#1a1b20"/><rect x="2737" y="608" width="9.260000000000218" height="7" fill="#1a1b20"/><rect x="2750.95" y="608" width="8.050000000000182" height="7" fill="#1a1b20"/><rect x="2143" y="580" width="8.659999999999854" height="7" fill="#1a1b20"/><rect x="2156.28" y="580" width="7.7199999999998" height="7" fill="#1a1b20"/></svg>
<svg class="s" style="left:0;top:0" width="2864" height="1776"><path d="M1624.7 709.5L1627 708L1628.9 699L1630.6 709.2L1647 709.2L1649 705.5L1651.7 709.2" fill="none" stroke="#5794f2" stroke-width="1.6"/><path d="M1848.5 608L1850.8 678.5L1853 677.5L1856 679L1859 677L1862 678L1865 676L1868 677L1871 675L1874 676.5L1876 675.5L1876 709L1848.5 709Z" fill="#233049"/><path d="M1848.5 608L1850.8 678.5L1853 677.5L1856 679L1859 677L1862 678L1865 676L1868 677L1871 675L1874 676.5L1876 675.5" fill="none" stroke="#5794f2" stroke-width="1.8"/><path d="M2086.9 648.7L2088 708.5L2092 708L2096 708.5L2100 707.5L2104 708.3L2108 707.4L2113.8 708" fill="none" stroke="#5794f2" stroke-width="1.6"/><path d="M2311 571L2312 575L2316 574L2320 575L2324 573.5L2328 574.5L2332 573L2338 574L2338 709L2311 709Z" fill="#233049"/><path d="M2311 571L2312 575L2316 574L2320 575L2324 573.5L2328 574.5L2332 573L2338 574" fill="none" stroke="#5794f2" stroke-width="1.8"/></svg>
<div class="b" style="left:44px;top:805px;width:2760px;height:438px;background:#1a1b20;border-radius:5px;box-shadow: inset 0 0 0 2px #2c2d33;"></div>
<div class="t" style="left:62px;top:838.08px;font-size:29.5px;color:#d0d0de;font-weight:400;letter-spacing:0.45px;-webkit-text-stroke:0.6px #d0d0de;"><span>All states</span></div>
<div class="t" style="left:68px;top:1017.49px;font-size:26px;color:#d0d0de;font-weight:400;-webkit-text-stroke:0.35px #d0d0de;"><span>mongos_6432</span></div>
<svg class="s" style="left:0;top:0" width="2864" height="1776"><rect x="366.0" y="902" width="1.5" height="242.5" fill="#2a2b30"/><rect x="470.4" y="902" width="1.5" height="242.5" fill="#2a2b30"/><rect x="574.8" y="902" width="1.5" height="242.5" fill="#2a2b30"/><rect x="679.2" y="902" width="1.5" height="242.5" fill="#2a2b30"/><rect x="783.6" y="902" width="1.5" height="242.5" fill="#2a2b30"/><rect x="888.0" y="902" width="1.5" height="242.5" fill="#2a2b30"/><rect x="992.3" y="902" width="1.5" height="242.5" fill="#2a2b30"/><rect x="1096.7" y="902" width="1.5" height="242.5" fill="#2a2b30"/><rect x="1201.1" y="902" width="1.5" height="242.5" fill="#2a2b30"/><rect x="1305.5" y="902" width="1.5" height="242.5" fill="#2a2b30"/><rect x="1409.9" y="902" width="1.5" height="242.5" fill="#2a2b30"/><rect x="1514.3" y="902" width="1.5" height="242.5" fill="#2a2b30"/><rect x="1618.7" y="902" width="1.5" height="242.5" fill="#2a2b30"/><rect x="1723.1" y="902" width="1.5" height="242.5" fill="#2a2b30"/><rect x="1827.5" y="902" width="1.5" height="242.5" fill="#2a2b30"/><rect x="1931.8" y="902" width="1.5" height="242.5" fill="#2a2b30"/><rect x="2036.2" y="902" width="1.5" height="242.5" fill="#2a2b30"/><rect x="2140.6" y="902" width="1.5" height="242.5" fill="#2a2b30"/><rect x="2245.0" y="902" width="1.5" height="242.5" fill="#2a2b30"/><rect x="2349.4" y="902" width="1.5" height="242.5" fill="#2a2b30"/><rect x="2453.8" y="1135" width="1.5" height="9.5" fill="#2a2b30"/><rect x="2558.2" y="1135" width="1.5" height="9.5" fill="#2a2b30"/><rect x="2662.6" y="1135" width="1.5" height="9.5" fill="#2a2b30"/><rect x="2767.0" y="1135" width="1.5" height="9.5" fill="#2a2b30"/><rect x="2454" y="902" width="316" height="233.5" fill="#6b9965"/></svg>
<div class="t" style="left:1612px;width:2000px;text-align:center;top:1017.34px;font-size:25px;color:#ffffff;font-weight:700;letter-spacing:0px;"><span style="margin-right:0px">UP</span></div>
<div class="t" style="left:-633.5px;width:2000px;text-align:center;top:1164.12px;font-size:26.2px;color:#d0d0de;font-weight:400;letter-spacing:0px;-webkit-text-stroke:0.3px #d0d0de;"><span style="margin-right:0px">04:30</span></div>
<div class="t" style="left:-529.11px;width:2000px;text-align:center;top:1164.12px;font-size:26.2px;color:#d0d0de;font-weight:400;letter-spacing:0px;-webkit-text-stroke:0.3px #d0d0de;"><span style="margin-right:0px">05:00</span></div>
<div class="t" style="left:-424.72px;width:2000px;text-align:center;top:1164.12px;font-size:26.2px;color:#d0d0de;font-weight:400;letter-spacing:0px;-webkit-text-stroke:0.3px #d0d0de;"><span style="margin-right:0px">05:30</span></div>
<div class="t" style="left:-320.3299999999999px;width:2000px;text-align:center;top:1164.12px;font-size:26.2px;color:#d0d0de;font-weight:400;letter-spacing:0px;-webkit-text-stroke:0.3px #d0d0de;"><span style="margin-right:0px">06:00</span></div>
<div class="t" style="left:-215.94000000000005px;width:2000px;text-align:center;top:1164.12px;font-size:26.2px;color:#d0d0de;font-weight:400;letter-spacing:0px;-webkit-text-stroke:0.3px #d0d0de;"><span style="margin-right:0px">06:30</span></div>
<div class="t" style="left:-111.54999999999995px;width:2000px;text-align:center;top:1164.12px;font-size:26.2px;color:#d0d0de;font-weight:400;letter-spacing:0px;-webkit-text-stroke:0.3px #d0d0de;"><span style="margin-right:0px">07:00</span></div>
<div class="t" style="left:-7.159999999999968px;width:2000px;text-align:center;top:1164.12px;font-size:26.2px;color:#d0d0de;font-weight:400;letter-spacing:0px;-webkit-text-stroke:0.3px #d0d0de;"><span style="margin-right:0px">07:30</span></div>
<div class="t" style="left:97.23000000000002px;width:2000px;text-align:center;top:1164.12px;font-size:26.2px;color:#d0d0de;font-weight:400;letter-spacing:0px;-webkit-text-stroke:0.3px #d0d0de;"><span style="margin-right:0px">08:00</span></div>
<div class="t" style="left:201.6199999999999px;width:2000px;text-align:center;top:1164.12px;font-size:26.2px;color:#d0d0de;font-weight:400;letter-spacing:0px;-webkit-text-stroke:0.3px #d0d0de;"><span style="margin-right:0px">08:30</span></div>
<div class="t" style="left:306.01px;width:2000px;text-align:center;top:1164.12px;font-size:26.2px;color:#d0d0de;font-weight:400;letter-spacing:0px;-webkit-text-stroke:0.3px #d0d0de;"><span style="margin-right:0px">09:00</span></div>
<div class="t" style="left:410.4000000000001px;width:2000px;text-align:center;top:1164.12px;font-size:26.2px;color:#d0d0de;font-weight:400;letter-spacing:0px;-webkit-text-stroke:0.3px #d0d0de;"><span style="margin-right:0px">09:30</span></div>
<div class="t" style="left:514.79px;width:2000px;text-align:center;top:1164.12px;font-size:26.2px;color:#d0d0de;font-weight:400;letter-spacing:0px;-webkit-text-stroke:0.3px #d0d0de;"><span style="margin-right:0px">10:00</span></div>
<div class="t" style="left:619.1800000000001px;width:2000px;text-align:center;top:1164.12px;font-size:26.2px;color:#d0d0de;font-weight:400;letter-spacing:0px;-webkit-text-stroke:0.3px #d0d0de;"><span style="margin-right:0px">10:30</span></div>
<div class="t" style="left:723.5699999999999px;width:2000px;text-align:center;top:1164.12px;font-size:26.2px;color:#d0d0de;font-weight:400;letter-spacing:0px;-webkit-text-stroke:0.3px #d0d0de;"><span style="margin-right:0px">11:00</span></div>
<div class="t" style="left:827.96px;width:2000px;text-align:center;top:1164.12px;font-size:26.2px;color:#d0d0de;font-weight:400;letter-spacing:0px;-webkit-text-stroke:0.3px #d0d0de;"><span style="margin-right:0px">11:30</span></div>
<div class="t" style="left:932.3499999999999px;width:2000px;text-align:center;top:1164.12px;font-size:26.2px;color:#d0d0de;font-weight:400;letter-spacing:0px;-webkit-text-stroke:0.3px #d0d0de;"><span style="margin-right:0px">12:00</span></div>
<div class="t" style="left:1036.74px;width:2000px;text-align:center;top:1164.12px;font-size:26.2px;color:#d0d0de;font-weight:400;letter-spacing:0px;-webkit-text-stroke:0.3px #d0d0de;"><span style="margin-right:0px">12:30</span></div>
<div class="t" style="left:1141.13px;width:2000px;text-align:center;top:1164.12px;font-size:26.2px;color:#d0d0de;font-weight:400;letter-spacing:0px;-webkit-text-stroke:0.3px #d0d0de;"><span style="margin-right:0px">13:00</span></div>
<div class="t" style="left:1245.52px;width:2000px;text-align:center;top:1164.12px;font-size:26.2px;color:#d0d0de;font-weight:400;letter-spacing:0px;-webkit-text-stroke:0.3px #d0d0de;"><span style="margin-right:0px">13:30</span></div>
<div class="t" style="left:1349.9099999999999px;width:2000px;text-align:center;top:1164.12px;font-size:26.2px;color:#d0d0de;font-weight:400;letter-spacing:0px;-webkit-text-stroke:0.3px #d0d0de;"><span style="margin-right:0px">14:00</span></div>
<div class="t" style="left:1454.3000000000002px;width:2000px;text-align:center;top:1164.12px;font-size:26.2px;color:#d0d0de;font-weight:400;letter-spacing:0px;-webkit-text-stroke:0.3px #d0d0de;"><span style="margin-right:0px">14:30</span></div>
<div class="t" style="left:1558.69px;width:2000px;text-align:center;top:1164.12px;font-size:26.2px;color:#d0d0de;font-weight:400;letter-spacing:0px;-webkit-text-stroke:0.3px #d0d0de;"><span style="margin-right:0px">15:00</span></div>
<div class="t" style="left:1663.08px;width:2000px;text-align:center;top:1164.12px;font-size:26.2px;color:#d0d0de;font-weight:400;letter-spacing:0px;-webkit-text-stroke:0.3px #d0d0de;"><span style="margin-right:0px">15:30</span></div>
<div style="position:absolute;left:2700px;top:1140px;width:86px;height:45px;overflow:hidden"><div class="t" style="left:-932.5px;width:2000px;text-align:center;top:24.12px;font-size:26.2px;color:#d0d0de"><span>16:00</span></div></div>
<div class="b" style="left:70px;top:1203px;width:28px;height:8px;background:#6b9965;border-radius:4px;"></div>
<div class="t" style="left:114.5px;top:1206.14px;font-size:25px;color:#d0d0de;font-weight:400;-webkit-text-stroke:0.3px #d0d0de;"><span>UP</span></div>
<div class="b" style="left:44px;top:1337px;width:1372px;height:500px;background:#1a1b20;border-radius:5px;box-shadow: inset 0 0 0 2px #2c2d33;"></div>
<div class="b" style="left:1432px;top:1337px;width:1372px;height:500px;background:#1a1b20;border-radius:5px;box-shadow: inset 0 0 0 2px #2c2d33;"></div>
<div class="t" style="left:62px;top:1369.87px;font-size:30.4px;color:#d0d0de;font-weight:400;letter-spacing:0px;-webkit-text-stroke:0.7px #d0d0de;"><span>Command Operations</span></div>
<svg class="s" style="left:392px;top:1354.4px;" width="30" height="30" viewBox="0 0 30 30"><circle cx="15" cy="15" r="12.2" fill="none" stroke="#8e8e99" stroke-width="2.4"/><line x1="15" y1="13.5" x2="15" y2="20.5" stroke="#8e8e99" stroke-width="2.6" stroke-linecap="round"/><circle cx="15" cy="9.4" r="1.6" fill="#8e8e99"/></svg>
<div class="t" style="left:1451px;top:1370.18px;font-size:29.5px;color:#d0d0de;font-weight:400;letter-spacing:0px;-webkit-text-stroke:0.7px #d0d0de;"><span>Connections</span></div>
<svg class="s" style="left:1654px;top:1354.4px;" width="30" height="30" viewBox="0 0 30 30"><circle cx="15" cy="15" r="12.2" fill="none" stroke="#8e8e99" stroke-width="2.4"/><line x1="15" y1="13.5" x2="15" y2="20.5" stroke="#8e8e99" stroke-width="2.6" stroke-linecap="round"/><circle cx="15" cy="9.4" r="1.6" fill="#8e8e99"/></svg>
<div class="t" style="left:-272px;width:2000px;text-align:center;top:1626.03px;font-size:38px;color:#8e8e99;font-weight:400;letter-spacing:0px;-webkit-text-stroke:0.4px #8e8e99;"><span style="margin-right:0px">No data</span></div>
<div class="t" style="left:1116px;width:2000px;text-align:center;top:1626.03px;font-size:38px;color:#8e8e99;font-weight:400;letter-spacing:0px;-webkit-text-stroke:0.4px #8e8e99;"><span style="margin-right:0px">No data</span></div>
<svg class="s" style="left:219.5px;top:1698.5px;" width="30" height="40" viewBox="0 0 30 40"><path d="M3 2L3 30L9.5 24L14 34.5L19 32.5L14.5 22.5L23 22.5Z" fill="#000" stroke="#fff" stroke-width="2.2" stroke-linejoin="round"/></svg>
</body></html>
